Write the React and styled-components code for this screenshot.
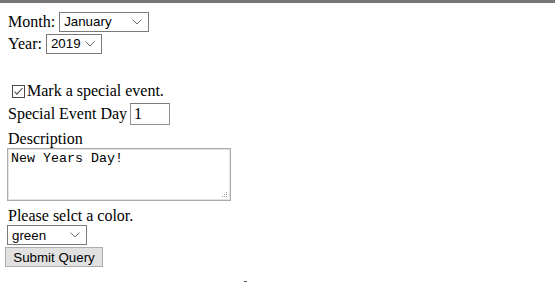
import React from 'react';
import styled, { createGlobalStyle } from 'styled-components';

const GlobalStyle = createGlobalStyle`
  html, body {
    margin: 0;
    padding: 0;
    background: #ffffff;
  }
  body {
    font-family: 'Liberation Serif', 'Times New Roman', serif;
    font-size: 16px;
    color: #000000;
  }
`;

const Chevron = () => (
  <svg width='10' height='6' viewBox='0 0 10 6'>
    <path d='M0.5 0.5 L5 5 L9.5 0.5' fill='none' stroke='#6d6d6d' strokeWidth='1' />
  </svg>
);

const CheckIcon = () => (
  <svg width='13' height='13' viewBox='0 0 13 13'>
    <rect x='0.5' y='0.5' width='12' height='12' fill='#ffffff' stroke='#4a4a4a' />
    <path d='M2.5 6.5 L5 9.2 L10.5 3' fill='none' stroke='#4a4a4a' strokeWidth='1.1' />
  </svg>
);

const App = () => {
  return (
    <>
      <GlobalStyle />
      <TopBar />
      <Form>
        <Row $h={22}>
          Month:
          <SelectBox $w={90}>
            January
            <Chevron />
          </SelectBox>
        </Row>
        <Row $h={21}>
          Year:
          <SelectBox $w={56}>
            2019
            <Chevron />
          </SelectBox>
        </Row>
        <Spacer />
        <CheckRow>
          <CheckIcon />
          Mark a special event.
        </CheckRow>
        <Row $h={22}>
          Special Event Day
          <TextInput>1</TextInput>
        </Row>
        <Label $top={5} $h={18}>Description</Label>
        <TextArea>
          New Years Day!
          <Grip viewBox='0 0 7 7'>
            <rect x='5' y='1' width='1' height='1' />
            <rect x='3' y='3' width='1' height='1' />
            <rect x='5' y='3' width='1' height='1' />
            <rect x='1' y='5' width='1' height='1' />
            <rect x='3' y='5' width='1' height='1' />
            <rect x='5' y='5' width='1' height='1' />
          </Grip>
        </TextArea>
        <Label $top={5} $h={19}>Please selct a color.</Label>
        <SelectBox $w={80} $left={-1}>
          green
          <Chevron />
        </SelectBox>
        <SubmitButton>Submit Query</SubmitButton>
      </Form>
      <Speck />
    </>
  );
};

const TopBar = styled.div`
  height: 3px;
  background: #767676;
`;

const Form = styled.form`
  display: flex;
  flex-direction: column;
  align-items: flex-start;
  padding: 8px 0 0 8px;
`;

const Row = styled.div`
  display: flex;
  align-items: center;
  gap: 4px;
  height: ${(p) => p.$h}px;
  line-height: 18px;
`;

const Spacer = styled.div`
  height: 27px;
`;

const CheckRow = styled.div`
  display: flex;
  align-items: center;
  gap: 2px;
  padding-left: 4px;
  height: 20px;
  margin-bottom: 2px;
`;

const SelectBox = styled.div`
  box-sizing: border-box;
  display: flex;
  align-items: center;
  justify-content: space-between;
  width: ${(p) => p.$w}px;
  height: 20px;
  padding: 0 6px 0 4px;
  margin-left: ${(p) => p.$left || 0}px;
  border: 1px solid #7a7a7a;
  background: #ffffff;
  font-family: 'Liberation Sans', Arial, sans-serif;
  font-size: 13.33px;
  color: #000000;
`;

const TextInput = styled.div`
  box-sizing: border-box;
  width: 40px;
  height: 22px;
  padding: 0 3px;
  border: 1px solid #8f8f8f;
  border-top-color: #7a7a7a;
  display: flex;
  align-items: center;
  font-size: 16px;
  margin-left: -1px;
`;

const Label = styled.div`
  height: ${(p) => p.$h}px;
  line-height: ${(p) => p.$h}px;
  margin-top: ${(p) => p.$top}px;
`;

const TextArea = styled.div`
  position: relative;
  box-sizing: border-box;
  width: 224px;
  height: 53px;
  margin-left: -1px;
  padding: 2px 3px;
  border: 1px solid #a9a9a9;
  box-shadow: inset 0 0 0 1px #e3e3e3;
  font-family: 'Liberation Mono', 'Courier New', monospace;
  font-size: 13.33px;
  line-height: 15px;
`;

const Grip = styled.svg`
  position: absolute;
  right: 2px;
  bottom: 2px;
  width: 7px;
  height: 7px;
  fill: #9a9a9a;
`;

const SubmitButton = styled.button`
  box-sizing: border-box;
  margin: 2px 0 0 -3px;
  height: 20px;
  width: 98px;
  padding: 0;
  border: 1px solid #adadad;
  background: #e1e1e1;
  font-family: 'Liberation Sans', Arial, sans-serif;
  font-size: 13.33px;
  color: #000000;
`;

const Speck = styled.div`
  position: absolute;
  left: 244px;
  top: 281px;
  width: 3px;
  height: 1px;
  background: #555555;
`;

export default App;
